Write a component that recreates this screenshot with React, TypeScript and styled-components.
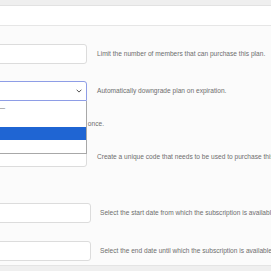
import styled, { createGlobalStyle } from 'styled-components'

const GlobalStyle = createGlobalStyle`
  html, body {
    margin: 0;
    padding: 0;
    background: #fbfbfb;
  }
  body {
    font-family: 'Liberation Sans', Arial, sans-serif;
    overflow: hidden;
  }
`

const Page = styled.div`
  width: 271px;
  height: 271px;
  overflow: hidden;
  display: flex;
  flex-direction: column;
  background: #fbfbfb;
`
const TopBar = styled.div`
  height: 5px;
  flex-shrink: 0;
  background: #efefef;
  border-bottom: 1px solid #e2e2e2;
`
const SubBar = styled.div`
  height: 19px;
  flex-shrink: 0;
  background: #ffffff;
  border-bottom: 1px solid #e6e6e6;
`
const Section = styled.div<{ $field: number; $gap: number; $rowGap: number; $top: number }>`
  display: grid;
  grid-template-columns: ${({ $field }) => $field}px max-content;
  column-gap: ${({ $gap }) => $gap}px;
  row-gap: ${({ $rowGap }) => $rowGap}px;
  margin-left: -40px;
  margin-top: ${({ $top }) => $top}px;
  flex-shrink: 0;
`
const Input = styled.div`
  height: 20px;
  box-sizing: border-box;
  background: #ffffff;
  border: 1px solid #dcdcdc;
  border-radius: 3px;
`
const SelectWrap = styled.div`
  position: relative;
  z-index: 2;
`
const SelectBox = styled.div`
  height: 20px;
  box-sizing: border-box;
  background: #ffffff;
  border: 1px solid #8e9de6;
  border-radius: 3px 3px 0 0;
  display: flex;
  align-items: center;
  justify-content: flex-end;
  padding-right: 4px;
`
const Dropdown = styled.ul`
  position: absolute;
  top: 100%;
  left: 0;
  right: 0;
  margin: 0;
  padding: 0;
  list-style: none;
  background: #ffffff;
  border: 1px solid #a8a8a8;
  border-top: none;
`
const Option = styled.li<{ $selected?: boolean }>`
  height: 13px;
  line-height: 13px;
  padding-left: 9px;
  font-size: 6.6px;
  white-space: nowrap;
  color: ${({ $selected }) => ($selected ? '#ffffff' : '#777777')};
  background: ${({ $selected }) => ($selected ? '#1f65d3' : 'transparent')};
`
const Desc = styled.div`
  align-self: center;
  font-size: 6.6px;
  line-height: 10px;
  color: #6e6e6e;
  white-space: nowrap;
`
const NoteText = styled.div`
  height: 12px;
  line-height: 12px;
  font-size: 6.6px;
  color: #6e6e6e;
  white-space: nowrap;
  text-align: right;
  margin-right: -17px;
`
const Footer = styled.div`
  margin-top: auto;
  height: 5px;
  flex-shrink: 0;
  background: #efefef;
  border-top: 1px solid #e4e4e4;
`

const Chevron = () => (
  <svg width="6" height="4" viewBox="0 0 6 4" fill="none">
    <path d="M0.6 0.7 L3 3.1 L5.4 0.7" stroke="#555" strokeWidth="1" />
  </svg>
)

export default function App() {
  return (
    <Page>
      <GlobalStyle />
      <TopBar />
      <SubBar />
      <Section $field={127} $gap={10} $rowGap={17} $top={18}>
        <Input />
        <Desc>Limit the number of members that can purchase this plan.</Desc>

        <SelectWrap>
          <SelectBox>
            <Chevron />
          </SelectBox>
          <Dropdown>
            <Option>— Select —</Option>
            <Option>Free</Option>
            <Option $selected>Basic</Option>
            <Option>Pro</Option>
          </Dropdown>
        </SelectWrap>
        <Desc>Automatically downgrade plan on expiration.</Desc>

        <NoteText>Can be purchased only once.</NoteText>
        <div />

        <Input />
        <Desc>Create a unique code that needs to be used to purchase this plan.</Desc>
      </Section>
      <Section $field={131} $gap={9} $rowGap={18} $top={36}>
        <Input />
        <Desc>Select the start date from which the subscription is available.</Desc>
        <Input />
        <Desc>Select the end date until which the subscription is available.</Desc>
      </Section>
      <Footer />
    </Page>
  )
}
